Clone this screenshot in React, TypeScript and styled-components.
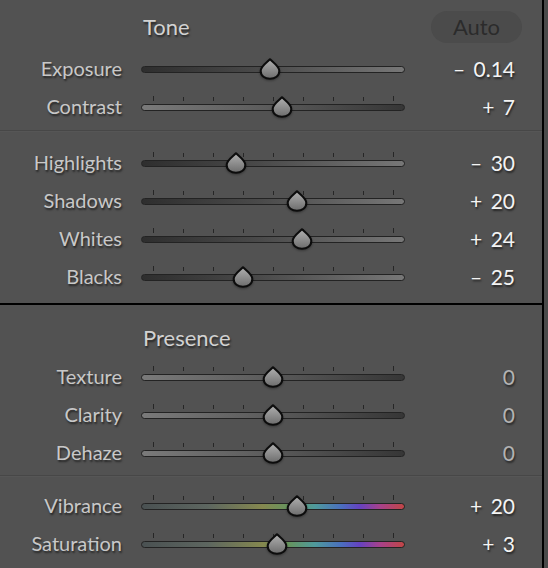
import React, { useId } from "react";
import styled, { createGlobalStyle } from "styled-components";

const GlobalStyle = createGlobalStyle`
  html, body { margin: 0; padding: 0; background: #4a4a4a; }
  body { font-family: Lato, "Open Sans", sans-serif; }
  * { box-sizing: border-box; }
`;

const Panel = styled.div`
  width: 544px;
  height: 568px;
  background: #525252;
  border-right: 2px solid #000;
  display: flex;
  flex-direction: column;
  overflow: hidden;
`;

const Section = styled.section`
  display: flex;
  flex-direction: column;
`;

const SectionHeader = styled.div<{ $h: number; $pt: number }>`
  display: grid;
  grid-template-columns: 122px 264px 1fr;
  column-gap: 19px;
  align-items: center;
  height: ${(p) => p.$h}px;
  padding-top: ${(p) => p.$pt}px;
  padding-right: 20px;
`;

const Heading = styled.h2`
  grid-column: 2;
  margin: 0 0 0 2px;
  font-weight: 400;
  font-size: 22px;
  color: #d2d2d2;
  text-shadow: 1px 2px 2px rgba(0, 0, 0, 0.55);
`;

const AutoButton = styled.button`
  grid-column: 3;
  justify-self: end;
  width: 91px;
  height: 32px;
  border: none;
  border-radius: 16px;
  background: #4b4b4b;
  color: #2b2b2b;
  font-family: Lato, "Open Sans", sans-serif;
  font-size: 22px;
  padding: 0;
`;

const Group = styled.div<{ $pt: number; $pb: number }>`
  display: flex;
  flex-direction: column;
  padding-top: ${(p) => p.$pt}px;
  padding-bottom: ${(p) => p.$pb}px;
`;

const Divider = styled.div`
  height: 2px;
  background: #474747;
  border-bottom: 1px solid #565656;
`;

const BlackRule = styled.div`
  height: 2px;
  background: #000;
`;

const Row = styled.div`
  display: grid;
  grid-template-columns: 122px 264px 1fr;
  column-gap: 19px;
  align-items: center;
  height: 38px;
  padding-right: 27px;
`;

const Label = styled.span`
  text-align: right;
  font-size: 20px;
  color: #c8c8c8;
  text-shadow: 1px 2px 2px rgba(0, 0, 0, 0.55);
  white-space: nowrap;
`;

const Value = styled.span<{ $muted: boolean }>`
  text-align: right;
  font-size: 21px;
  word-spacing: 3px;
  color: ${(p) => (p.$muted ? "#b3b3b3" : "#f4f4f4")};
  text-shadow: 1px 2px 2px rgba(0, 0, 0, 0.55);
  white-space: pre;
`;

const TrackWrap = styled.div`
  position: relative;
  height: 7px;
  margin-top: 2px;
`;

const Track = styled.div<{ $bg: string }>`
  height: 7px;
  border-radius: 4px;
  border: 1.5px solid #232323;
  background: ${(p) => p.$bg};
`;

const Tick = styled.span<{ $tall: boolean }>`
  position: absolute;
  bottom: 10px;
  width: 1.5px;
  height: ${(p) => (p.$tall ? 5 : 3.5)}px;
  background: #262626;
`;

const ThumbSvg = styled.svg`
  position: absolute;
  top: -8px;
  width: 22px;
  height: 22px;
  overflow: visible;
  filter: drop-shadow(0 1px 1px rgba(0, 0, 0, 0.35));
`;

type SliderDef = {
  label: string;
  value: string;
  pos: number; // 0..1
  track: string;
  ticks?: boolean;
};

const DARK_TO_LIGHT = "linear-gradient(to right, #2e2e2e, #4a4a4a 45%, #777 100%)";
const LIGHT_TO_DARK = "linear-gradient(to right, #7a7a7a, #5a5a5a 50%, #363636 100%)";
const COLOR_TRACK =
  "linear-gradient(to right, #4a5152 0%, #5d6660 25%, #85884f 46%, #66945e 56%, #4f9a9c 66%, #4a6fbe 76%, #6542c0 83%, #a8418a 91%, #c04646 100%)";

const Thumb: React.FC<{ x: number }> = ({ x }) => {
  const id = useId();
  return (
    <ThumbSvg viewBox="0 0 22 22" style={{ left: x - 11 }}>
      <defs>
        <linearGradient id={id} x1="0" y1="0" x2="0" y2="1">
          <stop offset="0" stopColor="#b0b0b0" />
          <stop offset="1" stopColor="#6c6c6c" />
        </linearGradient>
      </defs>
      <path
        d="M11 1.2 C13.5 4.2 20.3 8 20.3 13 C20.3 18 16 20.8 11 20.8 C6 20.8 1.7 18 1.7 13 C1.7 8 8.5 4.2 11 1.2 Z"
        fill={`url(#${id})`}
        stroke="#0c0c0c"
        strokeWidth="2"
        strokeLinejoin="round"
      />
    </ThumbSvg>
  );
};

const TICKS = [0, 1, 2, 3, 4, 5, 6, 7, 8];

const Slider: React.FC<SliderDef> = ({ label, value, pos, track, ticks = true }) => (
  <Row>
    <Label>{label}</Label>
    <TrackWrap>
      {ticks &&
        TICKS.map((i) => (
          <Tick key={i} $tall={i === 0 || i === 8} style={{ left: 11.5 + i * 30 }} />
        ))}
      <Track $bg={track} />
      <Thumb x={10 + pos * 244} />
    </TrackWrap>
    <Value $muted={value === "0"}>{value}</Value>
  </Row>
);

const frac = (v: number, min: number, max: number) => (v - min) / (max - min);

export default function App() {
  return (
    <>
      <GlobalStyle />
      <Panel>
        <Section>
          <SectionHeader $h={49} $pt={4}>
            <Heading>Tone</Heading>
            <AutoButton>Auto</AutoButton>
          </SectionHeader>
          <Group $pt={0} $pb={5}>
            <Slider label="Exposure" value="– 0.14" pos={frac(-0.14, -5, 5)} track={DARK_TO_LIGHT} ticks={false} />
            <Slider label="Contrast" value="+ 7" pos={frac(7, -100, 100)} track={LIGHT_TO_DARK} />
          </Group>
          <Divider />
          <Group $pt={11} $pb={8}>
            <Slider label="Highlights" value="– 30" pos={frac(-30, -100, 100)} track={DARK_TO_LIGHT} />
            <Slider label="Shadows" value="+ 20" pos={frac(20, -100, 100)} track={DARK_TO_LIGHT} />
            <Slider label="Whites" value="+ 24" pos={frac(24, -100, 100)} track={DARK_TO_LIGHT} />
            <Slider label="Blacks" value="– 25" pos={frac(-25, -100, 100)} track={DARK_TO_LIGHT} />
          </Group>
        </Section>
        <BlackRule />
        <Section>
          <SectionHeader $h={52} $pt={12}>
            <Heading>Presence</Heading>
          </SectionHeader>
          <Group $pt={0} $pb={4}>
            <Slider label="Texture" value="0" pos={0.5} track={LIGHT_TO_DARK} />
            <Slider label="Clarity" value="0" pos={0.5} track={LIGHT_TO_DARK} />
            <Slider label="Dehaze" value="0" pos={0.5} track={LIGHT_TO_DARK} />
          </Group>
          <Divider />
          <Group $pt={9} $pb={0}>
            <Slider label="Vibrance" value="+ 20" pos={frac(20, -100, 100)} track={COLOR_TRACK} />
            <Slider label="Saturation" value="+ 3" pos={frac(3, -100, 100)} track={COLOR_TRACK} />
          </Group>
        </Section>
      </Panel>
    </>
  );
}
